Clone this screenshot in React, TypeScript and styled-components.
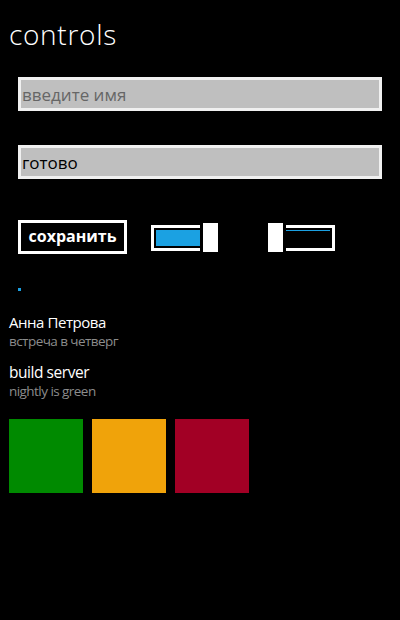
import React from "react";
import styled, { createGlobalStyle } from "styled-components";

const GlobalStyle = createGlobalStyle`
  html, body {
    margin: 0;
    padding: 0;
    background: #000;
  }
  body {
    font-family: "Open Sans", "Noto Sans", "DejaVu Sans", sans-serif;
    color: #fff;
  }
`;

const accent = "#1ba1e2";

const Page = styled.div`
  width: 400px;
  height: 620px;
  background: #000;
  display: flex;
  flex-direction: column;
  overflow: hidden;
`;

const Title = styled.h1`
  margin: 17px 0 0 9px;
  font-size: 28px;
  line-height: 34px;
  font-weight: 300;
  letter-spacing: 0.7px;
  color: #fff;
`;

const Controls = styled.div`
  display: flex;
  flex-direction: column;
  padding: 0 18px;
`;

const TextBox = styled.div<{ $top: number; $placeholder?: boolean }>`
  margin-top: ${(p) => p.$top}px;
  height: 34px;
  box-sizing: border-box;
  border: 3px solid #f0f0f0;
  background: #bfbfbf;
  display: flex;
  align-items: center;
  padding: 0 1px;
  font-size: 17px;
  color: ${(p) => (p.$placeholder ? "#666" : "#000")};
`;

const Row = styled.div`
  margin-top: 41px;
  display: flex;
  align-items: flex-start;
`;

const SaveButton = styled.button`
  width: 109px;
  height: 34px;
  box-sizing: border-box;
  border: 3px solid #fff;
  background: #000;
  color: #fff;
  font-family: inherit;
  font-size: 16px;
  font-weight: 700;
  padding: 0 0 2px;
  display: flex;
  align-items: center;
  justify-content: center;
`;

const Toggle = styled.div<{ $left: number }>`
  position: relative;
  margin: 3px 0 0 ${(p) => p.$left}px;
  width: 67px;
  height: 29px;
`;

const Track = styled.div`
  margin-top: 2px;
  height: 26px;
  box-sizing: border-box;
  border: 3px solid #fff;
  padding: 2px;
`;

const Fill = styled.div<{ $on: boolean }>`
  height: ${(p) => (p.$on ? "100%" : "1px")};
  width: ${(p) => (p.$on ? "44px" : "100%")};
  background: ${accent};
`;

const Thumb = styled.div<{ $on: boolean }>`
  position: absolute;
  top: 0;
  ${(p) => (p.$on ? "right: 0;" : "left: 0;")}
  width: 15px;
  height: 29px;
  background: #fff;
  box-shadow: 0 0 0 3px #000;
`;

const Dot = styled.div`
  margin-top: 34px;
  width: 3px;
  height: 3px;
  background: ${accent};
`;

const List = styled.div`
  margin-top: 21px;
  padding-left: 9px;
  display: flex;
  flex-direction: column;
`;

const Item = styled.div<{ $top: number }>`
  margin-top: ${(p) => p.$top}px;
  display: flex;
  flex-direction: column;
`;

const ItemTitle = styled.div<{ $size: number }>`
  font-size: ${(p) => p.$size}px;
  line-height: 20px;
  letter-spacing: -0.45px;
  color: #fff;
`;

const ItemSub = styled.div`
  font-size: 13.5px;
  line-height: 18px;
  letter-spacing: -0.55px;
  color: #8c8c8c;
`;

const Tiles = styled.div`
  margin: 19px 0 0 9px;
  display: flex;
  gap: 9px;
`;

const Tile = styled.div<{ $color: string }>`
  width: 74px;
  height: 74px;
  background: ${(p) => p.$color};
`;

function Switch({ on, left }: { on: boolean; left: number }) {
  return (
    <Toggle $left={left}>
      <Track>
        <Fill $on={on} />
      </Track>
      <Thumb $on={on} />
    </Toggle>
  );
}

const items = [
  { title: "Анна Петрова", sub: "встреча в четверг", top: 0, size: 15 },
  { title: "build server", sub: "nightly is green", top: 12, size: 15.5 },
];

const tiles = ["#008a00", "#f0a30a", "#a20025"];

export default function App() {
  return (
    <Page>
      <GlobalStyle />
      <Title>controls</Title>
      <Controls>
        <TextBox $top={26} $placeholder>
          введите имя
        </TextBox>
        <TextBox $top={34}>готово</TextBox>
        <Row>
          <SaveButton>сохранить</SaveButton>
          <Switch on left={24} />
          <Switch on={false} left={50} />
        </Row>
        <Dot />
      </Controls>
      <List>
        {items.map((it) => (
          <Item key={it.title} $top={it.top}>
            <ItemTitle $size={it.size}>{it.title}</ItemTitle>
            <ItemSub>{it.sub}</ItemSub>
          </Item>
        ))}
      </List>
      <Tiles>
        {tiles.map((c) => (
          <Tile key={c} $color={c} />
        ))}
      </Tiles>
    </Page>
  );
}
